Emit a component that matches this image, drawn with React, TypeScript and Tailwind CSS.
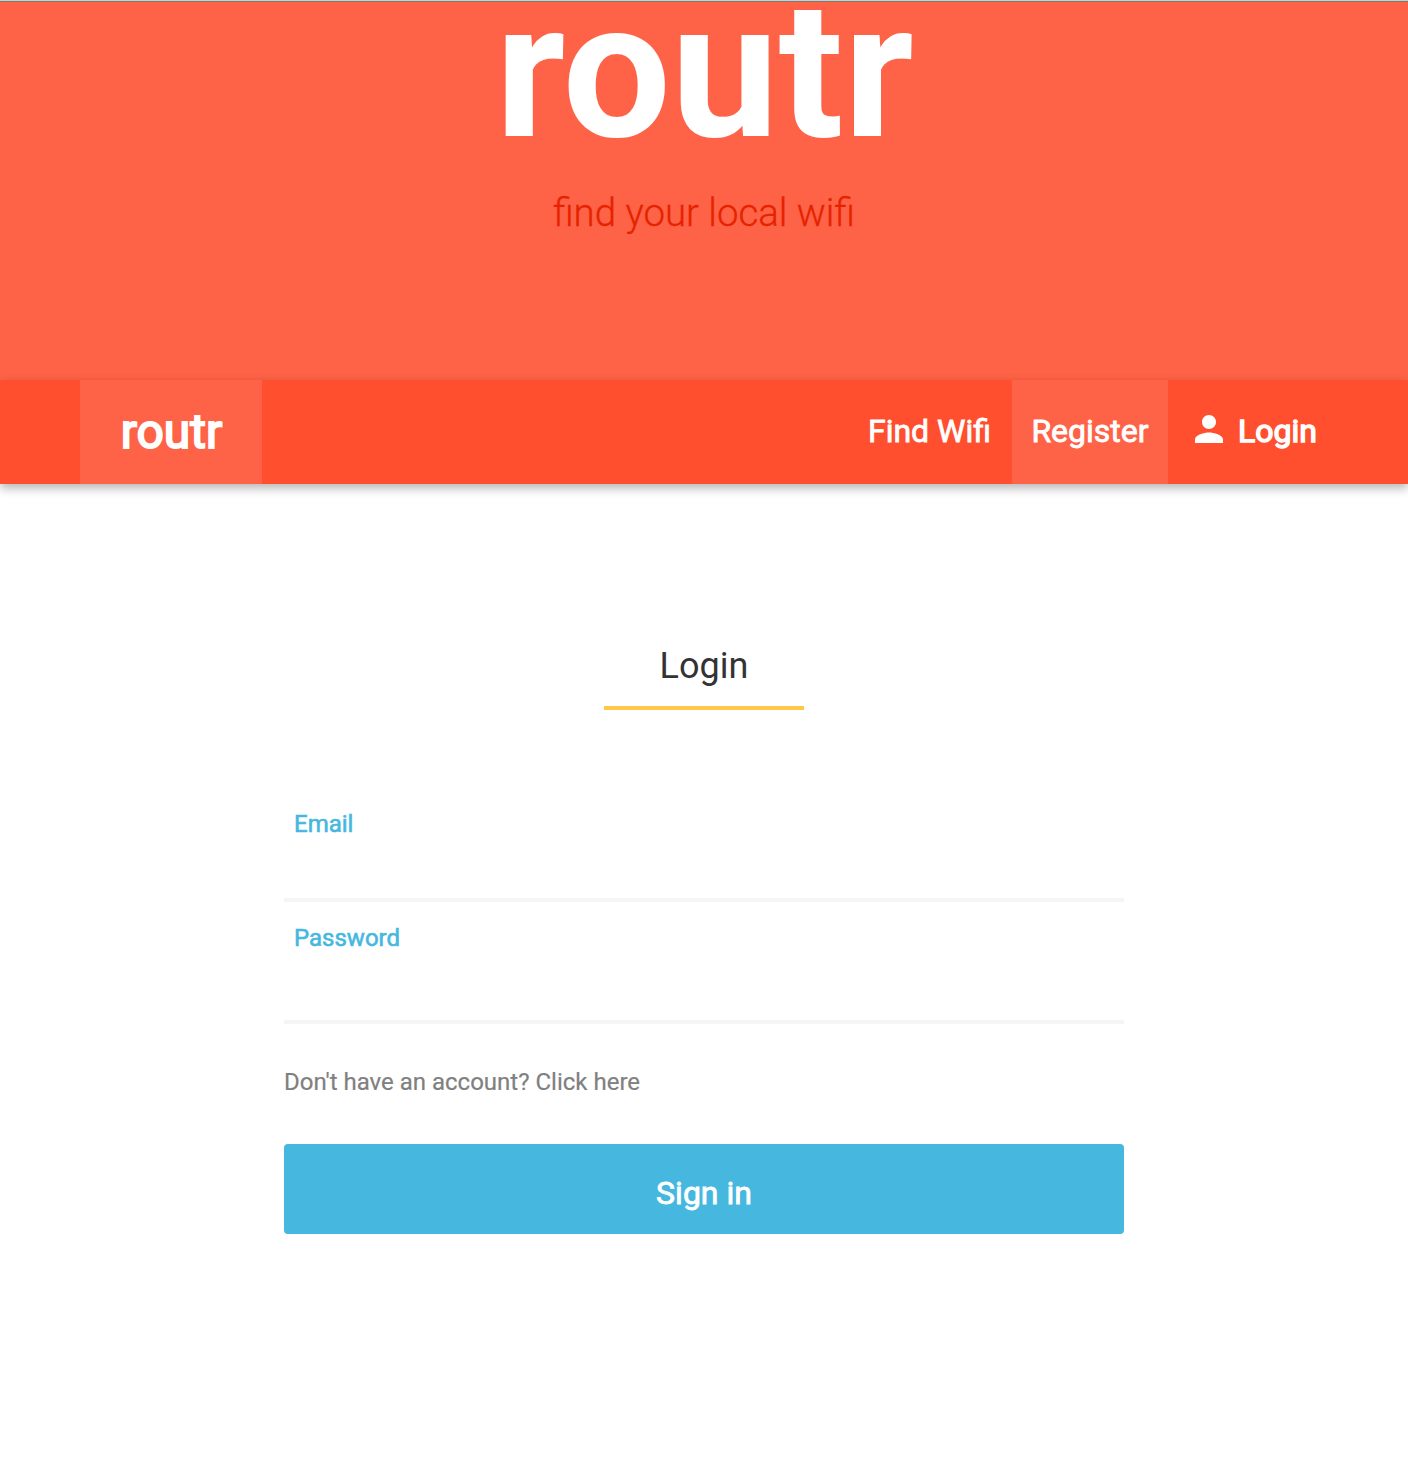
export default function App() {
  return (
    <div className="flex h-[1466px] w-[1408px] flex-col bg-white font-['Roboto',sans-serif]">
      <div className="h-px shrink-0 bg-[#c9cfca]" />
      <header className="flex h-[379px] shrink-0 flex-col items-center border-t border-[#7d7a74] bg-[#ff6347]">
        <h1 className="h-[150px] pt-[2px] pl-px text-[192px] leading-[134px] font-bold text-white">routr</h1>
        <p className="mt-[31px] text-[38.4px] leading-[60px] font-light text-[#e62200] [-webkit-text-stroke:0.3px_#e62200]">find your local wifi</p>
      </header>
      <nav className="z-10 flex h-[104px] shrink-0 bg-[#ff4f2e] px-20 shadow-[0_4px_10px_rgba(0,0,0,0.3)]">
        <a className="flex w-[182px] items-center justify-center bg-[#ff6347] pl-px text-[48px] text-white [-webkit-text-stroke:1.9px_#fff]">routr</a>
        <div className="ml-auto flex text-[32px] text-white [-webkit-text-stroke:0.8px_#fff]">
          <a className="flex items-center pr-[21px] pb-[3px] pl-5">Find Wifi</a>
          <a className="flex w-[156px] items-center justify-center bg-[#ff6347] pb-[3px]">Register</a>
          <a className="flex w-[160px] items-center pb-[3px] pl-5 [-webkit-text-stroke:1.4px_#fff]">
            <svg className="mr-2 mb-[3px] size-[42px] shrink-0" viewBox="0 0 24 24" fill="currentColor"><path d="M12 12c2.21 0 4-1.79 4-4s-1.79-4-4-4-4 1.79-4 4 1.79 4 4 4zm0 2c-2.67 0-8 1.34-8 4v2h16v-2c0-2.66-5.33-4-8-4z" /></svg>
            <span>Login</span>
          </a>
        </div>
      </nav>
      <main className="mx-auto flex w-[840px] flex-col">
        <h2 className="mx-auto mt-[142px] h-[84px] w-[200px] border-b-4 border-[#ffc84a] text-center text-[36px] leading-[80px] text-[#333]">Login</h2>
        <label className="mt-[90px] h-[102px] border-b-4 border-[#f5f5f5] pl-[10px] text-[24px] leading-[48px] text-[#46b8df] [-webkit-text-stroke:0.6px_#46b8df]">Email</label>
        <label className="mt-[12px] h-[110px] border-b-4 border-[#f5f5f5] pl-[10px] text-[24px] leading-[48px] text-[#46b8df] [-webkit-text-stroke:0.6px_#46b8df]">Password</label>
        <p className="mt-[40px] text-[24px] leading-[36px] text-[#808080] [-webkit-text-stroke:0.2px_#808080]">Don't have an account? Click here</p>
        <button className="mt-[44px] h-[90px] rounded-[4px] bg-[#46b8df] pt-[8px] text-[32px] text-white [-webkit-text-stroke:0.8px_#fff]">Sign in</button>
      </main>
    </div>
  );
}
